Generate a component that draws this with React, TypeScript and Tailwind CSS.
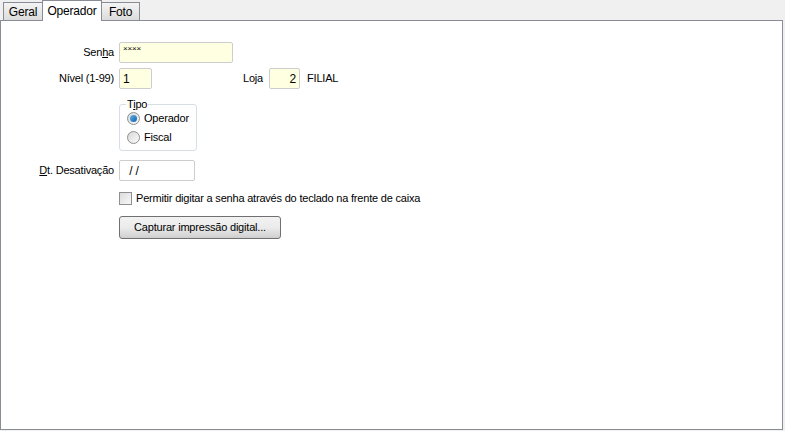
import { useState } from 'react'

const font = { fontFamily: '"Liberation Sans", Arial, sans-serif' }

function Field({ w, value, bg = 'bg-[#ffffe1]', right = false, small = false }: { w: string; value: string; bg?: string; right?: boolean; small?: boolean }) {
  return (
    <div className={`${w} h-[21px] ${bg} border border-[#cdcdcd] rounded-[2px] flex px-[3px] ${small ? 'items-start pt-[2px]' : 'items-center'} ${right ? 'justify-end' : ''}`}>
      <span className={`${small ? 'text-[8px]' : 'text-[12px]'} text-black leading-none whitespace-pre`}>{value}</span>
    </div>
  )
}

function Radio({ checked, label }: { checked: boolean; label: string }) {
  return (
    <label className="flex items-center gap-[4px] h-[19px]">
      <span className="w-[13px] h-[13px] rounded-full border border-[#8e8f8f] bg-gradient-to-br from-[#d8d8d8] to-[#fbfbfb] flex items-center justify-center">
        {checked && <span className="w-[7px] h-[7px] rounded-full bg-gradient-to-br from-[#5fb4e8] to-[#0d5fa8]" />}
      </span>
      <span>{label}</span>
    </label>
  )
}

const tabs = [
  { name: 'Geral', w: 'w-[40px]' },
  { name: 'Operador', w: 'w-[60px]' },
  { name: 'Foto', w: 'w-[39px]' },
]

export default function App() {
  const [tab] = useState('Operador')

  return (
    <div style={font} className="w-[785px] h-[431px] bg-[#f0f0f0] text-[11px] tracking-[-0.2px] text-black flex flex-col">
      {/* tab strip */}
      <div className="h-[20px] flex items-end pl-[3px] relative z-10">
        {tabs.map(t => t.name === tab ? (
          <div key={t.name} className={`${t.w} h-[21px] -mb-[1px] -ml-px bg-white border border-b-0 border-[#898c95] flex items-start justify-center pt-[1px] text-[12px]`}>{t.name}</div>
        ) : (
          <div key={t.name} className={`${t.w} h-[18px] bg-gradient-to-b from-[#f4f4f4] to-[#dcdcdc] border border-b-0 border-[#898c95] flex items-center justify-center text-[12px] -ml-px first:ml-0`}>{t.name}</div>
        ))}
      </div>

      {/* page */}
      <div className="flex-1 mr-[2px] mb-[1px] bg-white border border-[#898c95] pt-[21px]">
        <div className="grid grid-cols-[113px_auto] gap-x-[5px] items-center">
          <div className="text-right">Sen<u>h</u>a</div>
          <Field w="w-[114px]" value="××××" small />

          <div className="text-right mt-[5px]">Nível (1-99)</div>
          <div className="flex items-center mt-[5px]">
            <Field w="w-[33px]" value="1" />
            <span className="ml-[91px]">Loja</span>
            <div className="ml-[6px]"><Field w="w-[31px]" value="2" right /></div>
            <span className="ml-[7px]">FILIAL</span>
          </div>

          <div />
          <fieldset className="mt-[10px] w-[78px] h-[52px] border border-[#d5dfe5] rounded-[3px] px-[7px] pb-[2px]">
            <legend className="px-[1px] ml-[-1px] leading-[11px]">T<u>i</u>po</legend>
            <div className="-mt-[1px]">
              <Radio checked label="Operador" />
              <Radio checked={false} label="Fiscal" />
            </div>
          </fieldset>

          <div className="text-right mt-[9px]"><u>D</u>t. Desativação</div>
          <div className="mt-[9px]"><Field w="w-[76px]" value="  / /" bg="bg-white" /></div>

          <div />
          <label className="flex items-center gap-[4px] mt-[9px]">
            <span className="w-[13px] h-[13px] border border-[#8e8f8f] bg-gradient-to-br from-[#dcdcdc] to-[#f8f8f8]" />
            <span>Permitir digitar a senha através do teclado na frente de caixa</span>
          </label>

          <div />
          <button className="mt-[9px] w-[162px] h-[23px] border border-[#707070] rounded-[3px] bg-gradient-to-b from-[#f2f2f2] via-[#ebebeb] to-[#cfcfcf] text-[11px] text-black">
            Capturar impressão digital...
          </button>
        </div>
      </div>
    </div>
  )
}
